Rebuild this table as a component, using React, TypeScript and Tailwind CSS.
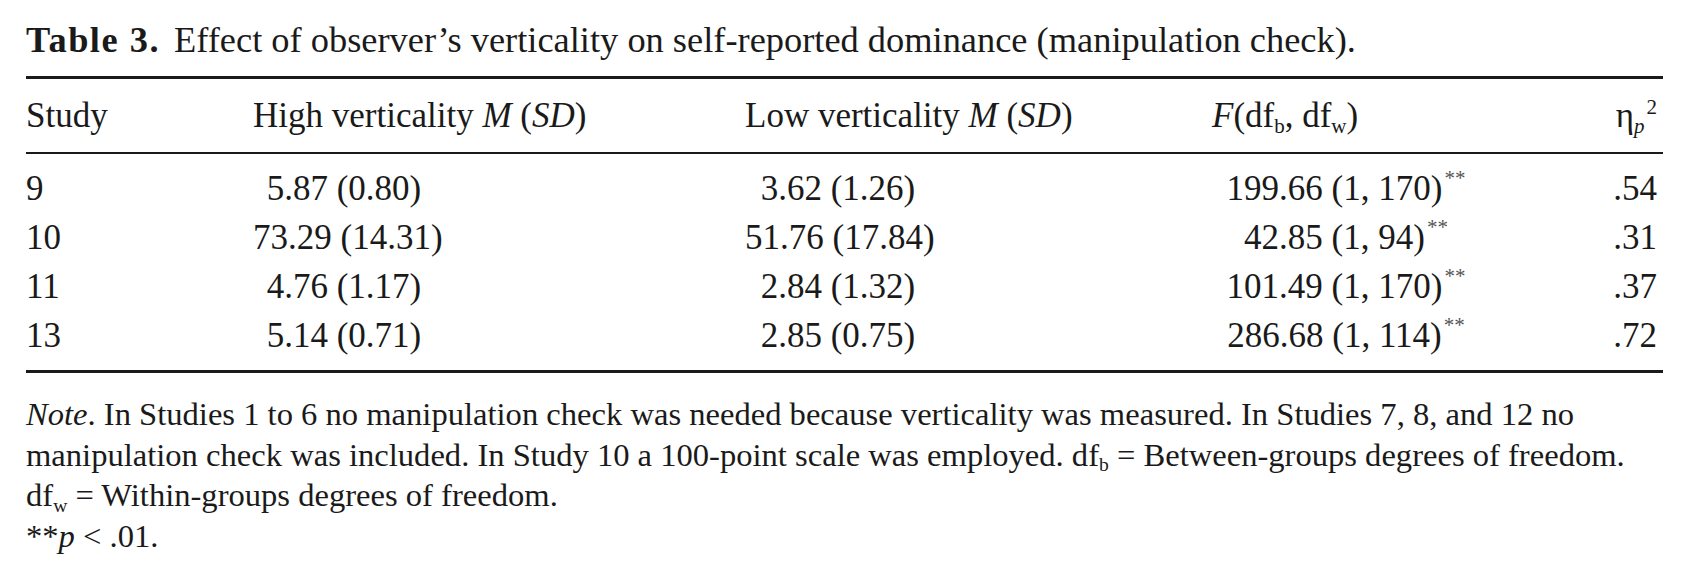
import React from "react";

const Sub = ({ children, italic = false }: { children: React.ReactNode; italic?: boolean }) => (
  <span className={`relative top-[0.3em] text-[0.6em] leading-none ${italic ? "italic" : ""}`}>{children}</span>
);

const Stars = () => (
  <span className="relative top-[-0.7em] ml-[2px] text-[0.6em] leading-none text-[#555]">**</span>
);

const rows = [
  { s: "9", h: "5.87 (0.80)", l: "3.62 (1.26)", f: "199.66 (1, 170)", e: ".54" },
  { s: "10", h: "73.29 (14.31)", l: "51.76 (17.84)", f: "42.85 (1, 94)", e: ".31" },
  { s: "11", h: "4.76 (1.17)", l: "2.84 (1.32)", f: "101.49 (1, 170)", e: ".37" },
  { s: "13", h: "5.14 (0.71)", l: "2.85 (0.75)", f: "286.68 (1, 114)", e: ".72" },
];

export default function App() {
  return (
    <div className="w-[1688px] h-[578px] bg-white text-[#1a1a1a] font-['Liberation_Serif',serif] pl-[26px] pr-[25px] pt-[20px]">
      <div className="text-[36.4px] leading-[40px] whitespace-nowrap">
        <span className="font-bold tracking-[1.5px]">Table 3.</span>
        <span className="ml-[14px]">Effect of observer’s verticality on self-reported dominance (manipulation check).</span>
      </div>

      <div className="mt-[16px] h-[3px] bg-[#1a1a1a]" />

      <div className="grid grid-cols-[227px_492px_467px_1fr_auto] h-[73px] items-center text-[35px] leading-[40px] whitespace-nowrap">
        <div>Study</div>
        <div>
          High verticality <i>M</i> (<i>SD</i>)
        </div>
        <div>
          Low verticality <i>M</i> (<i>SD</i>)
        </div>
        <div>
          <i>F</i>(df<Sub>b</Sub>, df<Sub>w</Sub>)
        </div>
        <div className="pr-[6px]">
          η<Sub italic>p</Sub>
          <span className="relative top-[-0.6em] ml-[2px] text-[0.6em] leading-none">2</span>
        </div>
      </div>

      <div className="h-[2px] bg-[#1a1a1a]" />

      <div className="pt-[10px] pb-[10px]">
        {rows.map((r) => (
          <div
            key={r.s}
            className="grid grid-cols-[227px_492px_467px_1fr_auto] h-[49px] items-center text-[35px] leading-[40px] whitespace-nowrap"
          >
            <div>{r.s}</div>
            <div className="w-[182px] text-center">{r.h}</div>
            <div className="w-[186px] text-center">{r.l}</div>
            <div className="w-[268px] text-center">
              {r.f}
              <Stars />
            </div>
            <div className="pr-[6px] text-right">{r.e}</div>
          </div>
        ))}
      </div>

      <div className="h-[3px] bg-[#1a1a1a]" />

      <div className="mt-[21px] text-[32.6px] leading-[40.5px] whitespace-nowrap">
        <div>
          <i>Note</i>. In Studies 1 to 6 no manipulation check was needed because verticality was measured. In Studies 7, 8, and 12 no
        </div>
        <div>
          manipulation check was included. In Study 10 a 100-point scale was employed. df<Sub>b</Sub> = Between-groups degrees of freedom.
        </div>
        <div>
          df<Sub>w</Sub> = Within-groups degrees of freedom.
        </div>
        <div>
          **<i>p</i> &lt; .01.
        </div>
      </div>
    </div>
  );
}
